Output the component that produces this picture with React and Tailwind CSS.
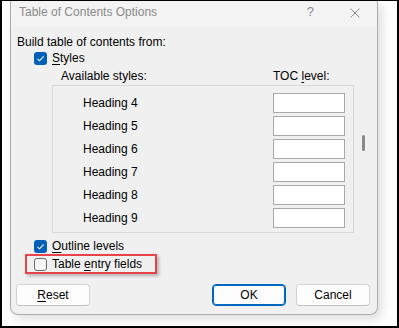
import React from "react";

function CheckBox({ checked }) {
  if (checked) {
    return (
      <div className="w-[13px] h-[13px] rounded-[3px] bg-[#005fb8] flex items-center justify-center shrink-0">
        <svg width="9" height="9" viewBox="0 0 9 9" fill="none">
          <path d="M1.5 4.8 L3.6 6.8 L7.6 2.4" stroke="#ffffff" strokeWidth="1.1" />
        </svg>
      </div>
    );
  }
  return (
    <div className="w-[13px] h-[13px] rounded-[3px] border border-[#6b6b6b] bg-[#f6f6f6] shrink-0" />
  );
}

const headings = ["Heading 4", "Heading 5", "Heading 6", "Heading 7", "Heading 8", "Heading 9"];

export default function App() {
  return (
    <div className="w-[399px] h-[328px] bg-black pt-px px-[2px] pb-[2px] font-['Liberation_Sans',Arial,sans-serif] text-[12px] leading-[16px] text-black">
      <div className="w-full h-full bg-white pl-[8px] overflow-hidden">
        <div className="w-[368px] h-[314px] bg-[#f0f0f0] border-x border-b border-[#ababab] rounded-b-[8px] shadow-[4px_4px_12px_rgba(0,0,0,0.14)]">
          {/* Title bar */}
          <div className="h-[26px] bg-[#f3f3f3] flex items-start pt-[3px] pl-[8px]">
            <span className="text-[#8a8a8a]">Table of Contents Options</span>
            <span className="ml-auto mr-[36px] text-[#8a8a8a] text-[13px]">?</span>
            <svg className="mr-[17px] mt-[4px]" width="10" height="10" viewBox="0 0 10 10">
              <path d="M0.5 0.5 L9.5 9.5 M9.5 0.5 L0.5 9.5" stroke="#8a8a8a" strokeWidth="1" />
            </svg>
          </div>

          {/* Body */}
          <div className="pl-[6px] pt-[7px]">
            <div className="h-[16px]">Build table of contents from:</div>
            <div className="h-[16px] flex items-center ml-[17px]">
              <CheckBox checked />
              <span className="ml-[5px]">
                <u className="underline-offset-[2px]">S</u>tyles
              </span>
            </div>
            <div className="flex ml-[44px] mt-[2px] h-[16px]">
              <span className="w-[212px]">Available styles:</span>
              <span>
                TOC <u className="underline-offset-[2px]">l</u>evel:
              </span>
            </div>
            <div className="flex items-start ml-[35px] mt-px">
              <div className="w-[302px] h-[148px] border border-[#d9d9d9] pt-[7px] flex flex-col gap-[3px]">
                {headings.map((h) => (
                  <div key={h} className="h-[20px] flex items-center pl-[30px]">
                    <span className="w-[190px]">{h}</span>
                    <div className="w-[72px] h-[20px] border border-[#a9a9a9] bg-white" />
                  </div>
                ))}
              </div>
              <div className="ml-[8px] mt-[50px] w-[3px] h-[16px] rounded-full bg-[#8a8a8a]" />
            </div>
            <div className="h-[16px] flex items-center ml-[17px] mt-[5px]">
              <CheckBox checked />
              <span className="ml-[5px]">
                <u className="underline-offset-[2px]">O</u>utline levels
              </span>
            </div>
            <div className="ml-[8px] w-[132px] h-[20px] border-2 border-[#e8434b] flex items-center pl-[7px] shadow-[2px_2px_3px_rgba(0,0,0,0.25)]">
              <CheckBox checked={false} />
              <span className="ml-[5px]">
                Table <u className="underline-offset-[2px]">e</u>ntry fields
              </span>
            </div>
          </div>

          {/* Buttons */}
          <div className="flex pl-[5px] pr-[7px] mt-[10px]">
            <button className="w-[74px] h-[22px] rounded-[4px] bg-[#fdfdfd] border border-[#d3d3d3] border-b-[#c2c2c2] flex items-center justify-center">
              <span>
                <u className="underline-offset-[2px]">R</u>eset
              </span>
            </button>
            <button className="ml-auto w-[74px] h-[22px] rounded-[4px] bg-[#fdfdfd] border border-[#0067c0] shadow-[inset_0_0_0_1px_#0067c0] flex items-center justify-center">
              OK
            </button>
            <button className="ml-[10px] w-[74px] h-[22px] rounded-[4px] bg-[#fdfdfd] border border-[#d3d3d3] border-b-[#c2c2c2] flex items-center justify-center">
              Cancel
            </button>
          </div>
        </div>
      </div>
    </div>
  );
}
